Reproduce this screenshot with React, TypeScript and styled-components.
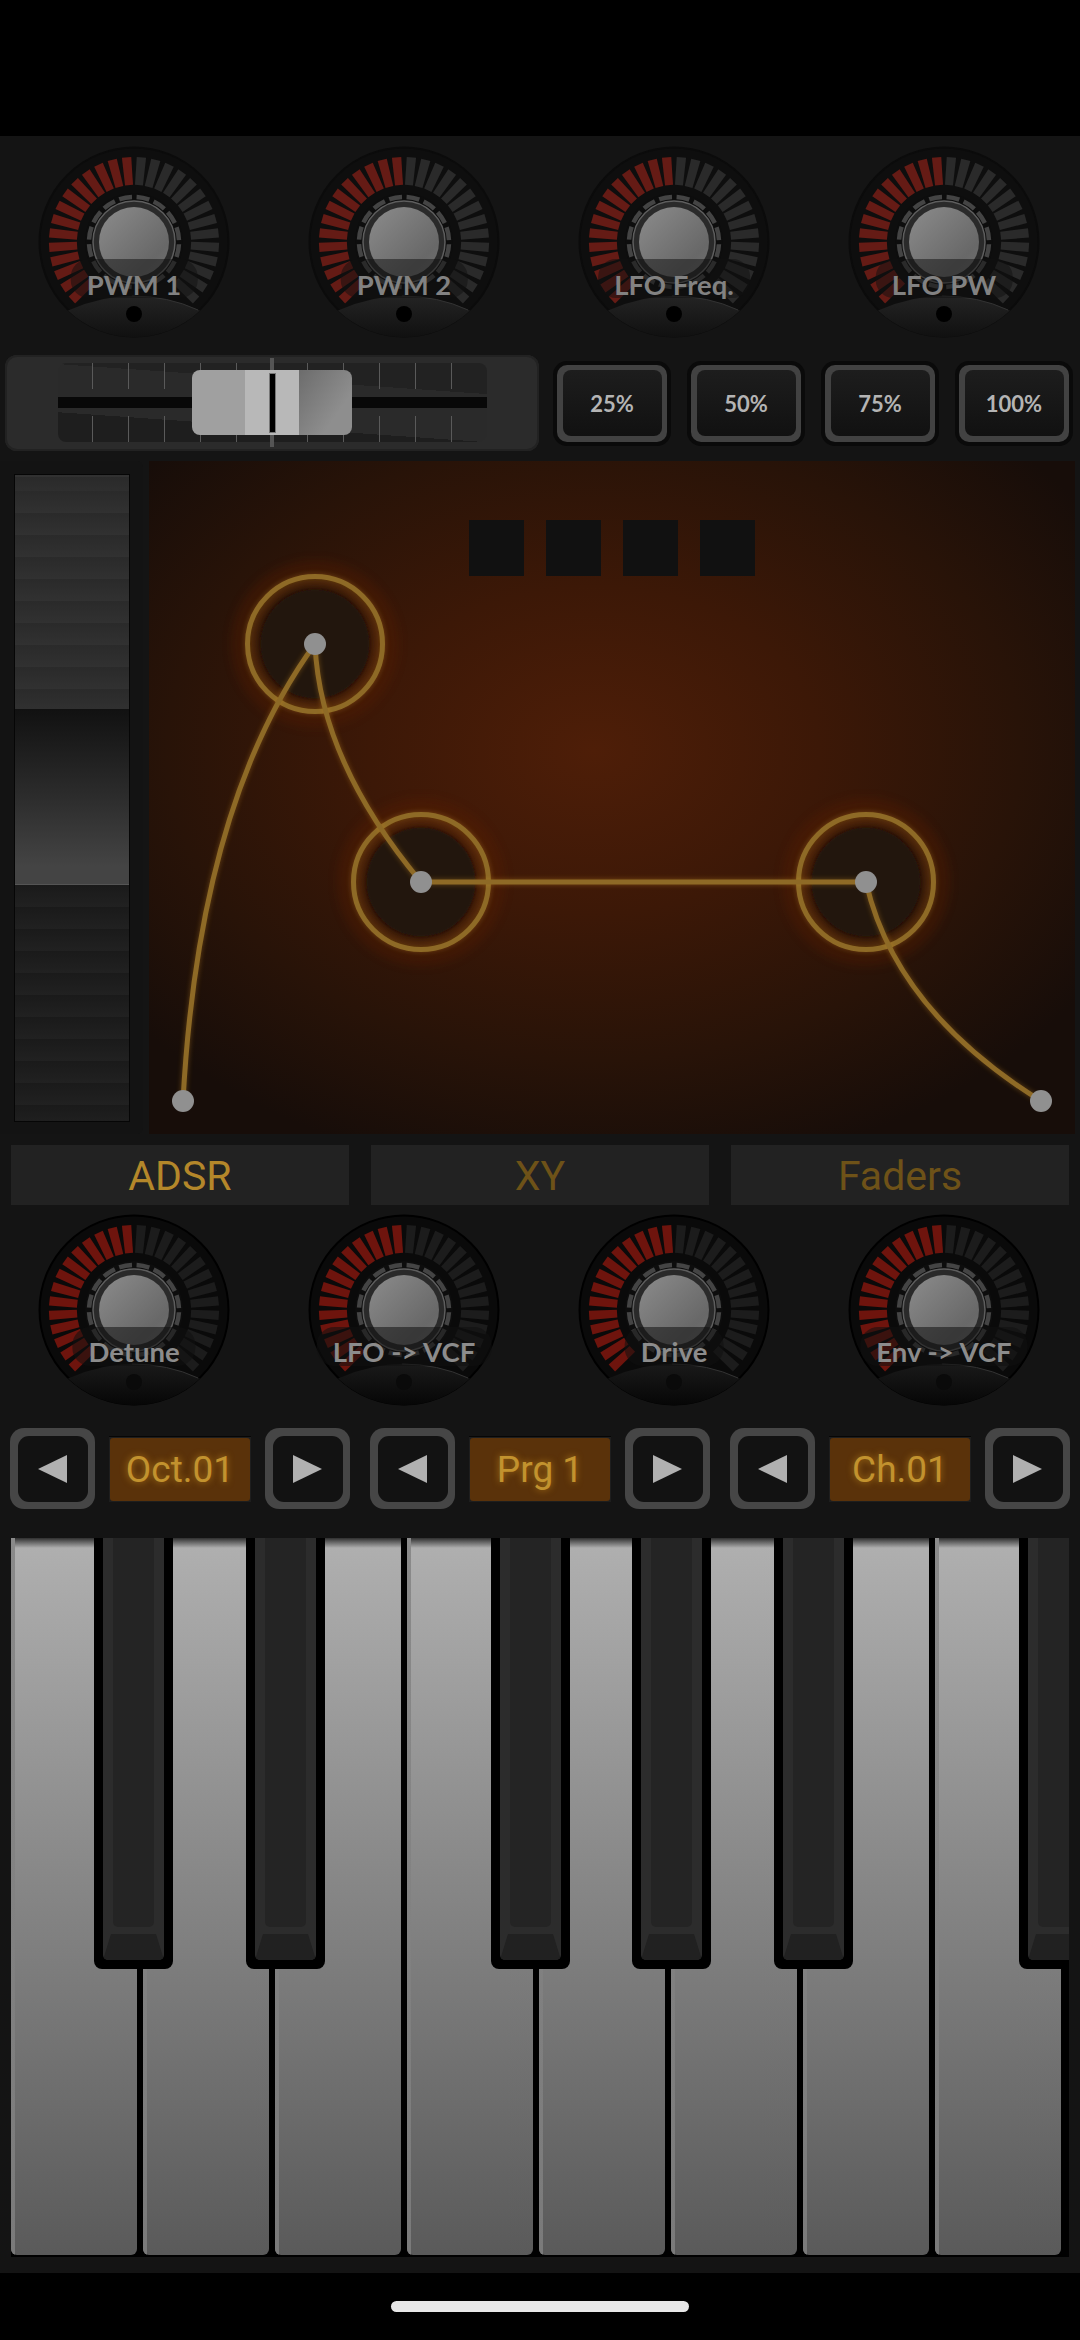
import React from 'react';
import styled, { createGlobalStyle } from 'styled-components';

const Global = createGlobalStyle`
  * { box-sizing: border-box; }
  html, body { margin: 0; padding: 0; background: #000; }
  body { font-family: "Roboto", "Liberation Sans", sans-serif; }
`;

const Screen = styled.div`
  width: 1080px;
  height: 2340px;
  background: #000;
  display: flex;
  flex-direction: column;
  overflow: hidden;
`;
const TopInset = styled.div`
  height: 136px;
  flex: none;
`;
const Panel = styled.main`
  height: 2137px;
  flex: none;
  background: #141414;
  display: flex;
  flex-direction: column;
  padding-bottom: 16px;
`;
const HomeArea = styled.div`
  flex: 1;
  display: flex;
  align-items: center;
  justify-content: center;
`;
const HomeBar = styled.div`
  width: 298px;
  height: 11px;
  border-radius: 6px;
  background: #e8e8e8;
`;

/* Knobs */
const KnobRow = styled.section<{ $top: number }>`
  display: grid;
  grid-template-columns: repeat(4, 270px);
  justify-items: center;
  margin: ${(p) => p.$top}px 0 0 -1px;
`;
const KnobWrap = styled.div`
  position: relative;
  width: 192px;
  height: 192px;
`;
const KnobLabel = styled.div<{ $dark: boolean }>`
  position: absolute;
  left: 50%;
  top: 113px;
  height: 39px;
  padding: ${(p) => (p.$dark ? 11 : 12)}px 16px 0;
  transform: translateX(-50%);
  border-radius: 18px;
  background: rgba(16, 16, 16, ${(p) => (p.$dark ? 0.55 : 0.5)});
  color: ${(p) => (p.$dark ? '#8c8c8c' : '#828282')};
  font-family: "Lato", "Liberation Sans", sans-serif;
  font-weight: 700;
  font-size: 27.5px;
  line-height: 27px;
  white-space: nowrap;
`;

const bar = (angle: number) => {
  const a = (angle * Math.PI) / 180;
  const s = Math.sin(a);
  const c = Math.cos(a);
  const pt = (r: number, w: number) => `${(r * s + w * c).toFixed(2)},${(-r * c + w * s).toFixed(2)}`;
  return [pt(85, -4.7), pt(85, 4.7), pt(57, 4), pt(57, -4)].join(' ');
};
const ANGLES = Array.from({ length: 14 }, (_, i) => 5 + i * 9.85);

function KnobDial({ dark, id }: { dark: boolean; id: string }) {
  const red = dark ? '#6e140d' : '#651b15';
  const dim = dark ? '#1c1c1c' : '#2a2a2a';
  const disc = dark ? '#0a0a0a' : '#0e0e0e';
  const rim = dark ? '#000' : '#0b0b0b';
  return (
    <svg width="192" height="192" viewBox="-96 -96 192 192" aria-hidden="true">
      <defs>
        <linearGradient id={`${id}b`} x1="0" y1="0" x2="1" y2="1">
          <stop offset="0" stopColor="#8c8c8c" />
          <stop offset="0.75" stopColor="#686868" />
          <stop offset="1" stopColor="#707070" />
        </linearGradient>
        <linearGradient id={`${id}w`} x1="0" y1="0" x2="0" y2="1">
          <stop offset="0" stopColor={dark ? '#1a1a1a' : '#242424'} />
          <stop offset="1" stopColor={dark ? '#060606' : '#101010'} />
        </linearGradient>
      </defs>
      <circle r="94.5" fill={disc} stroke={rim} strokeWidth="2" />
      {ANGLES.map((a) => (
        <polygon key={`r${a}`} points={bar(-a)} fill={red} />
      ))}
      {ANGLES.map((a) => (
        <polygon key={`d${a}`} points={bar(a)} fill={dim} />
      ))}
      <circle r="49" fill="#0d0d0d" />
      <circle r="45" fill="none" stroke="#444" strokeWidth="4.5" strokeDasharray="13 4.67" strokeDashoffset="-2.3" />
      <circle r="41" fill="#2a2a2a" stroke="#5e5e5e" strokeWidth="1.5" />
      <circle r="35" fill={`url(#${id}b)`} />
      <path d="M-66 68.5Q0 39 66 68.5A95 95 0 0 1 -66 68.5Z" fill={`url(#${id}w)`} />
      <path d="M-2 54Q34 54 64 68" fill="none" stroke="#333" strokeWidth="1" />
      <circle cy="72" r="8" fill={dark ? '#0a0a0a' : '#000'} />
    </svg>
  );
}

function Knob({ label, dark, id }: { label: string; dark: boolean; id: string }) {
  return (
    <KnobWrap>
      <KnobDial dark={dark} id={id} />
      <KnobLabel $dark={dark}>{label}</KnobLabel>
    </KnobWrap>
  );
}

/* Slider row */
const SliderRow = styled.section`
  display: flex;
  align-items: center;
  height: 96px;
  margin-top: 17px;
  padding-left: 5px;
  gap: 14px;
`;
const SliderPanel = styled.div`
  position: relative;
  width: 534px;
  height: 96px;
  padding: 8px 52px 9px 53px;
  border-radius: 12px;
  background: #2b2b2b;
  box-shadow: inset 0 0 0 2px #222;
`;
const Track = styled.div`
  height: 79px;
  display: flex;
  flex-direction: column;
  gap: 8px;
  border-radius: 8px;
  background: linear-gradient(184deg, #222 0 31px, #2a2a2a 31px 79px, #1e1e1e 79px);
`;
const TickRow = styled.div`
  height: 26px;
  display: flex;
  justify-content: space-between;
  padding: 0 35px 0 34px;
`;
const Tick = styled.span`
  width: 1px;
  height: 100%;
  background: #5a5a5a;
`;
const Groove = styled.div`
  height: 11px;
  flex: none;
  background: #080808;
`;
const CenterTick = styled.div`
  position: absolute;
  left: 265px;
  top: 3px;
  width: 4px;
  height: 89px;
  background: #555;
`;
const Handle = styled.div`
  position: absolute;
  left: 187px;
  top: 15px;
  width: 160px;
  height: 65px;
  display: flex;
  border-radius: 8px;
  overflow: hidden;
`;
const HandleLeft = styled.div`
  width: 53px;
  background: #a0a0a0;
`;
const HandleMid = styled.div`
  width: 54px;
  display: flex;
  align-items: center;
  justify-content: center;
  background: #b8b8b8;
`;
const HandleMark = styled.div`
  width: 7px;
  height: 60px;
  background: #000;
  border: 1px solid #777;
`;
const HandleRight = styled.div`
  flex: 1;
  background: linear-gradient(125deg, #6c6c6c, #8e8e8e 70%);
`;
const PercentRow = styled.div`
  display: flex;
  gap: 16px;
`;
const PercentOuter = styled.button`
  width: 118px;
  height: 85px;
  padding: 4px;
  border: 0;
  border-radius: 14px;
  background: #0a0a0a;
`;
const PercentFrame = styled.div`
  height: 100%;
  padding: 5.5px;
  border-radius: 10px;
  background: #424242;
`;
const PercentFace = styled.div`
  height: 100%;
  display: flex;
  align-items: center;
  justify-content: center;
  border-radius: 8px;
  background: linear-gradient(#1d1d1d, #111);
  color: #b4b4b4;
  font-family: "Lato", "Liberation Sans", sans-serif;
  font-weight: 700;
  font-size: 22px;
`;

/* Main area */
const MainRow = styled.section`
  display: flex;
  height: 673px;
  margin-top: 10px;
  gap: 6px;
`;
const FaderPanel = styled.div`
  width: 143px;
  padding: 13px 13px 12px 14px;
  background: #131313;
  border-radius: 0 6px 6px 0;
`;
const FaderStrip = styled.div`
  height: 100%;
  display: flex;
  flex-direction: column;
  border: 1px solid #060606;
`;
const FaderUpper = styled.div`
  height: 234px;
  background: repeating-linear-gradient(#2a2a2a 0, #313131 22px);
  background-position: 0 16px;
`;
const FaderCap = styled.div`
  height: 176px;
  background: linear-gradient(#111, #2c2c2c 50%, #444 90%);
  border-bottom: 1px solid #555;
`;
const FaderLower = styled.div`
  flex: 1;
  background: repeating-linear-gradient(#1a1a1a 0, #212121 22px);
`;
const XYPad = styled.div`
  position: relative;
  width: 926px;
  display: flex;
  justify-content: center;
  gap: 22px;
  padding-top: 59px;
  background: radial-gradient(ellipse 64% 64% at 48% 43%, #4e1e08 0, #3c1807 38%, #281308 72%, #170d09 100%);
`;
const PadSquare = styled.div`
  width: 55px;
  height: 56px;
  background: #111;
`;
const PadDrawing = styled.svg`
  position: absolute;
  inset: 0;
`;

function Ring({ x, y }: { x: number; y: number }) {
  return (
    <g>
      <circle cx={x} cy={y} r="76" fill="none" stroke="#5c1e00" strokeWidth="16" opacity="0.32" filter="url(#blurWide)" />
      <circle cx={x} cy={y} r="61" fill="none" stroke="#7a4210" strokeWidth="5" opacity="0.4" filter="url(#blurSoft)" />
      <circle cx={x} cy={y} r="54.5" fill="#20120a" filter="url(#blurEdge)" />
      <circle cx={x} cy={y} r="67.5" fill="none" stroke="#c98a20" strokeWidth="6" opacity="0.35" filter="url(#blurSoft)" />
      <circle cx={x} cy={y} r="67.5" fill="none" stroke="#8e6a26" strokeWidth="5" />
    </g>
  );
}

const CURVES = [
  'M183 1101Q199 803 315 644',
  'M315 644Q320 761 421 882',
  'M421 882L866 882',
  'M866 882Q895 1010 1041 1101',
];
const POINTS = [
  [183, 1101],
  [315, 644],
  [421, 882],
  [866, 882],
  [1041, 1101],
];

function Envelope() {
  return (
    <PadDrawing width="926" height="673" viewBox="149 461 926 673" aria-hidden="true">
      <defs>
        <filter id="blurEdge" x="-10%" y="-10%" width="120%" height="120%">
          <feGaussianBlur stdDeviation="1" />
        </filter>
        <filter id="blurSoft" x="-30%" y="-30%" width="160%" height="160%">
          <feGaussianBlur stdDeviation="2.5" />
        </filter>
        <filter id="blurWide" x="-40%" y="-40%" width="180%" height="180%">
          <feGaussianBlur stdDeviation="5" />
        </filter>
        <filter id="blurLine" filterUnits="userSpaceOnUse" x="149" y="461" width="926" height="673">
          <feGaussianBlur stdDeviation="2.5" />
        </filter>
      </defs>
      <Ring x={315} y={644} />
      <Ring x={421} y={882} />
      <Ring x={866} y={882} />
      {CURVES.map((d) => (
        <path key={`g${d}`} d={d} fill="none" stroke="#c98a20" strokeWidth="6" opacity="0.35" filter="url(#blurLine)" />
      ))}
      {CURVES.map((d) => (
        <path key={d} d={d} fill="none" stroke="#8e6a26" strokeWidth="5" />
      ))}
      {POINTS.map(([x, y]) => (
        <circle key={x} cx={x} cy={y} r="11" fill="#909090" />
      ))}
    </PadDrawing>
  );
}

/* Tabs */
const TabRow = styled.nav`
  display: grid;
  grid-template-columns: repeat(3, 338px);
  gap: 22px;
  margin: 11px 0 0 11px;
`;
const Tab = styled.div<{ $active: boolean }>`
  height: 60px;
  padding-top: 2px;
  display: flex;
  align-items: center;
  justify-content: center;
  background: #222;
  color: ${(p) => (p.$active ? '#b4872a' : '#6e5218')};
  font-size: 41px;
`;

/* Steppers */
const StepRow = styled.section`
  display: grid;
  grid-template-columns: repeat(3, 340px);
  gap: 20px;
  height: 81px;
  margin: 22px 0 0 10px;
`;
const StepGroup = styled.div`
  display: flex;
  align-items: center;
  gap: 14px;
`;
const StepButton = styled.button`
  width: 85px;
  height: 81px;
  flex: none;
  padding: 7.5px;
  border: 0;
  border-radius: 14px;
  background: #464646;
`;
const StepFace = styled.div`
  height: 100%;
  display: flex;
  align-items: center;
  justify-content: center;
  border-radius: 11px;
  background: #121212;
`;
const Display = styled.div`
  flex: 1;
  height: 66px;
  padding: 1px;
  background: #1e1e1e;
  border-top: 1px solid #060606;
`;
const DisplayFace = styled.div`
  height: 100%;
  display: flex;
  align-items: center;
  justify-content: center;
  border-radius: 3px;
  background: #5a320a;
  color: #c2922e;
  font-size: 37px;
  text-shadow: 0 0 7px rgba(205, 145, 30, 0.7);
`;

function Arrow({ right }: { right?: boolean }) {
  return (
    <svg width="29" height="28" viewBox="0 0 29 28" aria-hidden="true">
      <polygon points={right ? '0,0 29,14 0,28' : '29,0 0,14 29,28'} fill="#b0b0b0" />
    </svg>
  );
}

function Stepper({ value }: { value: string }) {
  return (
    <StepGroup>
      <StepButton><StepFace><Arrow /></StepFace></StepButton>
      <Display><DisplayFace>{value}</DisplayFace></Display>
      <StepButton><StepFace><Arrow right /></StepFace></StepButton>
    </StepGroup>
  );
}

/* Piano */
const KeyBed = styled.section`
  position: relative;
  display: flex;
  gap: 6px;
  width: 1058px;
  height: 719px;
  margin: 29px 0 0 11px;
  background: #000;
  overflow: hidden;
`;
const WhiteKey = styled.div`
  position: relative;
  width: 126px;
  height: 717px;
  flex: none;
  border-radius: 0 0 6px 6px;
  overflow: hidden;
  background:
    linear-gradient(rgba(25, 25, 25, 0.85), rgba(0, 0, 0, 0) 10px),
    linear-gradient(#b0b0b0, #5a5a5a);
  &::before {
    content: '';
    position: absolute;
    left: 0;
    top: 0;
    bottom: 0;
    width: 4px;
    background: linear-gradient(#8a8a8a, #7a7a7a);
  }
`;
const BlackKey = styled.div<{ $left: number }>`
  position: absolute;
  left: ${(p) => p.$left}px;
  top: 0;
  width: 79px;
  height: 431px;
  padding: 0 9px 9px;
  border-radius: 0 0 8px 8px;
  background: #000;
`;
const BlackBody = styled.div`
  height: 100%;
  display: flex;
  flex-direction: column;
  border-radius: 0 0 5px 5px;
  background: #2c2c2c;
  overflow: hidden;
`;
const BlackTop = styled.div`
  flex: 1;
  margin: 0 10px;
  border-radius: 0 0 5px 5px;
  background: #242424;
`;
const BlackFront = styled.div`
  height: 26px;
  margin-top: 7px;
  background: #212121;
  clip-path: polygon(8px 0, calc(100% - 8px) 0, 100% 100%, 0 100%);
`;

const KEYS = [0, 1, 2, 3, 4, 5, 6, 7];
const BLACKS = [83, 235, 480, 621, 763, 1008];

export default function App() {
  return (
    <Screen>
      <Global />
      <TopInset />
      <Panel>
        <KnobRow $top={10}>
          {['PWM 1', 'PWM 2', 'LFO Freq.', 'LFO PW'].map((l, i) => (
            <Knob key={l} label={l} dark={false} id={`a${i}`} />
          ))}
        </KnobRow>
        <SliderRow>
          <SliderPanel>
            <Track>
              <TickRow>{Array.from({ length: 11 }, (_, i) => <Tick key={i} />)}</TickRow>
              <Groove />
              <TickRow>{Array.from({ length: 11 }, (_, i) => <Tick key={i} />)}</TickRow>
            </Track>
            <CenterTick />
            <Handle>
              <HandleLeft />
              <HandleMid><HandleMark /></HandleMid>
              <HandleRight />
            </Handle>
          </SliderPanel>
          <PercentRow>
            {['25%', '50%', '75%', '100%'].map((t) => (
              <PercentOuter key={t}>
                <PercentFrame><PercentFace>{t}</PercentFace></PercentFrame>
              </PercentOuter>
            ))}
          </PercentRow>
        </SliderRow>
        <MainRow>
          <FaderPanel>
            <FaderStrip>
              <FaderUpper />
              <FaderCap />
              <FaderLower />
            </FaderStrip>
          </FaderPanel>
          <XYPad>
            <Envelope />
            <PadSquare />
            <PadSquare />
            <PadSquare />
            <PadSquare />
          </XYPad>
        </MainRow>
        <TabRow>
          <Tab $active>ADSR</Tab>
          <Tab $active={false}>XY</Tab>
          <Tab $active={false}>Faders</Tab>
        </TabRow>
        <KnobRow $top={9}>
          {['Detune', 'LFO -> VCF', 'Drive', 'Env -> VCF'].map((l, i) => (
            <Knob key={l} label={l} dark id={`b${i}`} />
          ))}
        </KnobRow>
        <StepRow>
          <Stepper value="Oct.01" />
          <Stepper value="Prg 1" />
          <Stepper value="Ch.01" />
        </StepRow>
        <KeyBed>
          {KEYS.map((k) => <WhiteKey key={k} />)}
          {BLACKS.map((x) => (
            <BlackKey key={x} $left={x}>
              <BlackBody>
                <BlackTop />
                <BlackFront />
              </BlackBody>
            </BlackKey>
          ))}
        </KeyBed>
      </Panel>
      <HomeArea><HomeBar /></HomeArea>
    </Screen>
  );
}
